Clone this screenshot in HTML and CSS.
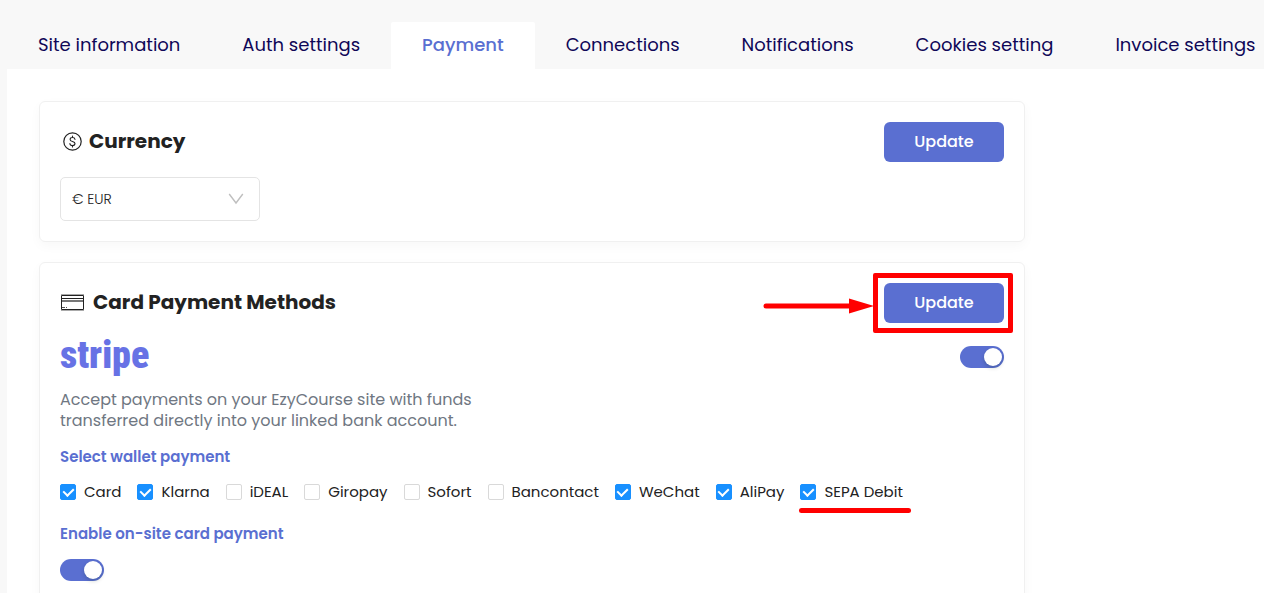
FILE: index.html
```html
<!DOCTYPE html>
<html lang="en">
<head>
    <meta charset="UTF-8">
    <meta name="viewport" content="width=device-width, initial-scale=1.0">
    <title>Payment settings</title>
    <link rel="stylesheet" href="styles.css">
</head>
<body>
    <nav class="tabs">
        <a class="tab" href="#site">Site information</a>
        <a class="tab" href="#auth">Auth settings</a>
        <a class="tab active" href="#payment">Payment</a>
        <a class="tab" href="#connections">Connections</a>
        <a class="tab" href="#notifications">Notifications</a>
        <a class="tab" href="#cookies">Cookies setting</a>
        <a class="tab" href="#invoice">Invoice settings</a>
    </nav>
    <main class="panel">
        <section class="card">
            <div class="card-header">
                <h2 class="card-title">
                    <svg class="title-icon" width="24" height="24" viewBox="0 0 24 24" fill="none" stroke="#222" stroke-width="1.2" stroke-linecap="round">
                        <circle cx="12.5" cy="12.5" r="8.7"/>
                        <path stroke-width="1.1" d="M15 10.4c-.2-1.2-1.1-1.9-2.5-1.9s-2.4.7-2.4 1.9c0 1.3 1 1.7 2.4 2.1s2.5.8 2.5 2.1-1 2-2.500 2-2.500-.8-2.600-2.100M12.500 7v1.500M12.500 16.600v1.400"/>
                    </svg>
                    Currency
                </h2>
                <button class="btn" type="button">Update</button>
            </div>
            <div class="select-box">
                <select class="currency" aria-label="Currency">
                    <option>€ EUR</option>
                    <option>$ USD</option>
                    <option>£ GBP</option>
                </select>
                <svg class="select-arrow" width="16" height="12" viewBox="0 0 16 12" fill="none" stroke="#bfbfbf" stroke-width="1.4">
                    <path d="M1.2 1 8 10l6.800-9"/>
                </svg>
            </div>
        </section>

        <section class="card">
            <div class="card-header">
                <h2 class="card-title card-title-wide">
                    <svg class="title-icon" width="24" height="24" viewBox="0 0 24 24" fill="none" stroke="#222">
                        <path d="M1.5 5.500h22v14h-22z"/>
                        <path d="M1 20.500h23M1 4.500h23" stroke="#aaa"/>
                        <path d="M1.500 8.500h22"/>
                        <path d="M2 11h21" stroke="#777" stroke-width="2"/>
                        <path d="M2 17.500h5" stroke="#555" stroke-dasharray="3 1"/>
                    </svg>
                    Card Payment Methods
                </h2>
                <div class="marked">
                    <button class="btn" type="button">Update</button>
                    <span class="mark-frame"></span>
                    <svg class="mark-arrow" width="111" height="16" viewBox="0 0 111 16">
                        <path d="M3 8h86" stroke="#f00" stroke-width="5" stroke-linecap="round"/>
                        <path d="M86 0.500 111 8 86 15.500z" fill="#f00"/>
                    </svg>
                </div>
            </div>
            <div class="provider">
                <span class="stripe-logo">stripe</span>
                <input class="switch" type="checkbox" role="switch" aria-label="Stripe" checked>
            </div>
            <p class="description">Accept payments on your EzyCourse site with funds<br>transferred directly into your linked bank account.</p>
            <h3 class="subtitle">Select wallet payment</h3>
            <div class="wallets">
                <label class="wallet"><input class="check" type="checkbox" checked>Card</label>
                <label class="wallet"><input class="check" type="checkbox" checked>Klarna</label>
                <label class="wallet"><input class="check" type="checkbox">iDEAL</label>
                <label class="wallet"><input class="check" type="checkbox">Giropay</label>
                <label class="wallet"><input class="check" type="checkbox">Sofort</label>
                <label class="wallet"><input class="check" type="checkbox">Bancontact</label>
                <label class="wallet"><input class="check" type="checkbox" checked>WeChat</label>
                <label class="wallet"><input class="check" type="checkbox" checked>AliPay</label>
                <label class="wallet underlined"><input class="check" type="checkbox" checked>SEPA Debit</label>
            </div>
            <h3 class="subtitle"><label for="onsite">Enable on-site card payment</label></h3>
            <input class="switch" id="onsite" type="checkbox" role="switch" checked>
        </section>
    </main>
</body>
</html>
```
FILE: styles.css
```css
* {
    box-sizing: border-box;
}
body {
    margin: 0;
    padding: 22px 0 0 7px;
    background: #f8f8f8;
    color: #222;
    font-family: Poppins, Inter, sans-serif;
    overflow-x: hidden;
}
.tabs {
    display: flex;
}
.tab {
    padding: 0 31px 2px;
    color: #0f0757;
    font-size: 18px;
    line-height: 45px;
    white-space: nowrap;
    text-decoration: none;
}
.tab.active {
    background: #fff;
    border-radius: 2px 2px 0 0;
    color: #5a6fd1;
    font-weight: 500;
}
.panel {
    display: flex;
    flex-direction: column;
    gap: 20px;
    padding: 32px;
    background: #fff;
}
.card {
    max-width: 986px;
    padding: 20px;
    border: 1px solid #f0f0f0;
    border-radius: 6px;
    box-shadow: 0 4px 12px rgba(0, 0, 0, 0.03);
}
.card-header {
    display: flex;
    justify-content: space-between;
    align-items: center;
}
.card-title {
    display: flex;
    align-items: center;
    gap: 5px;
    margin: 0;
    padding-bottom: 2px;
    font-size: 20px;
    line-height: 30px;
    font-weight: 700;
}
.card-title-wide {
    gap: 9px;
}
.btn {
    display: block;
    width: 120px;
    height: 40px;
    padding: 0 0 2px;
    border: none;
    border-radius: 6px;
    background: #5a6fd1;
    color: #fff;
    font-family: inherit;
    font-size: 16px;
    font-weight: 500;
    cursor: pointer;
}
.select-box {
    position: relative;
    width: 200px;
    margin-top: 15px;
}
.currency {
    display: block;
    width: 100%;
    height: 44px;
    padding: 0 11px;
    appearance: none;
    border: 1px solid #e4e4e4;
    border-radius: 5px;
    background: #fff;
    color: #222;
    font-family: inherit;
    font-size: 14px;
    font-weight: 300;
}
.select-arrow {
    position: absolute;
    top: 16px;
    right: 16px;
    pointer-events: none;
}

/* red marks around the button and under the wallet */
.marked {
    position: relative;
}
.mark-frame {
    position: absolute;
    inset: -10px -9px -10px -11px;
    border: 5px solid #f00;
    border-radius: 2px;
    pointer-events: none;
}
.mark-arrow {
    position: absolute;
    top: 15px;
    right: 130px;
}
.underlined {
    position: relative;
}
.underlined::after {
    content: "";
    position: absolute;
    top: 27px;
    left: -1px;
    right: -8px;
    height: 5px;
    border-radius: 3px;
    background: #f00;
}

.provider {
    display: flex;
    justify-content: space-between;
    align-items: center;
    margin-top: 12px;
}
.stripe-logo {
    padding-bottom: 4px;
    color: #6772e5;
    font-family: "Roboto Condensed", "Open Sans Condensed", Roboto, sans-serif;
    font-size: 38px;
    line-height: 40px;
    font-weight: 900;
}
.description {
    margin: 10px 0 15px;
    color: #6f7782;
    font-size: 16px;
    line-height: 21px;
    font-weight: 400;
}
.subtitle {
    margin: 0;
    color: #5a6fd1;
    font-size: 15px;
    line-height: 22px;
    font-weight: 600;
}
.wallets {
    display: flex;
    flex-wrap: wrap;
    gap: 16px;
    margin: 13px 0 21px;
}
.wallet {
    display: flex;
    align-items: center;
    gap: 8px;
    font-size: 15px;
    line-height: 21px;
    font-weight: 400;
}
.check {
    width: 16px;
    height: 16px;
    margin: 0;
    appearance: none;
    border: 1px solid #d9d9d9;
    border-radius: 2px;
    background: #fff;
}
.check:checked {
    display: grid;
    place-items: center;
    border-color: #1890ff;
    background: #1890ff;
}
.check:checked::before {
    content: "";
    width: 5px;
    height: 8px;
    margin-bottom: 2px;
    border: solid #fff;
    border-width: 0 2px 2px 0;
    transform: rotate(45deg);
}
.switch {
    display: flex;
    align-items: center;
    justify-content: flex-start;
    width: 44px;
    height: 22px;
    margin: 0;
    padding: 0 2px;
    appearance: none;
    border-radius: 11px;
    background: #bfbfbf;
}
.switch::before {
    content: "";
    width: 18px;
    height: 18px;
    border-radius: 50%;
    background: #fff;
    box-shadow: 0 2px 4px rgba(0, 35, 11, 0.2);
}
.switch:checked {
    justify-content: flex-end;
    background: #5a6fd1;
}
.subtitle + .switch {
    margin-top: 14px;
}
```
